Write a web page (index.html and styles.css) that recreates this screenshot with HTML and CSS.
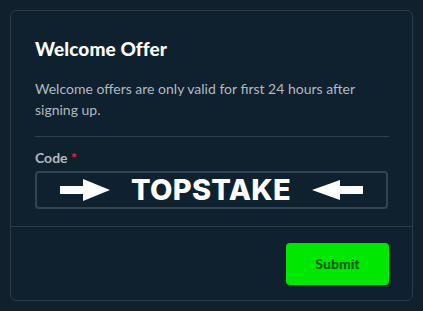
FILE: index.html
```html
<!DOCTYPE html>
<html lang="en">
<head>
<meta charset="utf-8">
<title>Welcome Offer</title>
<link rel="stylesheet" href="styles.css">
</head>
<body>
<div class="card">
  <div class="card-body">
    <h2 class="title">Welcome Offer</h2>
    <p class="desc">Welcome offers are only valid for first 24 hours after signing up.</p>
    <hr class="divider">
    <label class="label">Code <span class="req">*</span></label>
    <div class="code-input">
      <svg class="arrow" width="50" height="22" viewBox="0 0 50 22"><rect x="0" y="7" width="26" height="8" fill="#fff"/><polygon points="23,0 50,11 23,22" fill="#fff"/></svg>
      <span class="code">TOPSTAKE</span>
      <svg class="arrow" width="51" height="20" viewBox="0 0 51 20"><polygon points="0,10 28,0 28,20" fill="#fff"/><rect x="26" y="6" width="25" height="8" fill="#fff"/></svg>
    </div>
  </div>
  <div class="card-footer">
    <button class="submit">Submit</button>
  </div>
</div>
</body>
</html>
```
FILE: styles.css
```css
html, body {
  margin: 0;
  padding: 0;
  background: #10202d;
}
body {
  padding: 10px;
  font-family: "Lato", "Liberation Sans", sans-serif;
}
.card {
  width: 403px;
  height: 291px;
  box-sizing: border-box;
  border: 1px solid #2a3c4a;
  border-radius: 6px;
  background: #0f202e;
  display: flex;
  flex-direction: column;
}
.card-body {
  padding: 26px 24px 17px;
  border-bottom: 1px solid #2a3c4a;
}
.title {
  margin: 0;
  font-size: 19px;
  line-height: 24px;
  font-weight: 900;
  color: #ffffff;
  letter-spacing: 0.1px;
}
.desc {
  margin: 17px 0 0;
  font-size: 14px;
  line-height: 21px;
  color: #b1bac3;
}
.divider {
  margin: 16px 0 0;
  border: 0;
  border-top: 1px solid #2f4150;
  width: 354px;
}
.label {
  display: block;
  margin-top: 11px;
  font-size: 14px;
  line-height: 20px;
  font-weight: 700;
  color: #b1bac3;
}
.req {
  color: #e0245e;
}
.code-input {
  margin-top: 3px;
  height: 38px;
  box-sizing: border-box;
  border: 2px solid #2f4553;
  border-radius: 4px;
  display: flex;
  align-items: center;
  justify-content: center;
  gap: 21px;
}
.arrow {
  display: block;
}
.code {
  font-family: "Inter", sans-serif;
  font-weight: 800;
  font-size: 29px;
  line-height: 30px;
  color: #ffffff;
  letter-spacing: 0.3px;
}
.card-footer {
  flex: 1;
  display: flex;
  justify-content: flex-end;
  align-items: center;
  padding: 0 23px;
}
.submit {
  width: 103px;
  height: 42px;
  border: 0;
  border-radius: 4px;
  background: #00e701;
  color: #075e0d;
  font-family: "Lato", "Liberation Sans", sans-serif;
  font-weight: 900;
  font-size: 14px;
}
```
